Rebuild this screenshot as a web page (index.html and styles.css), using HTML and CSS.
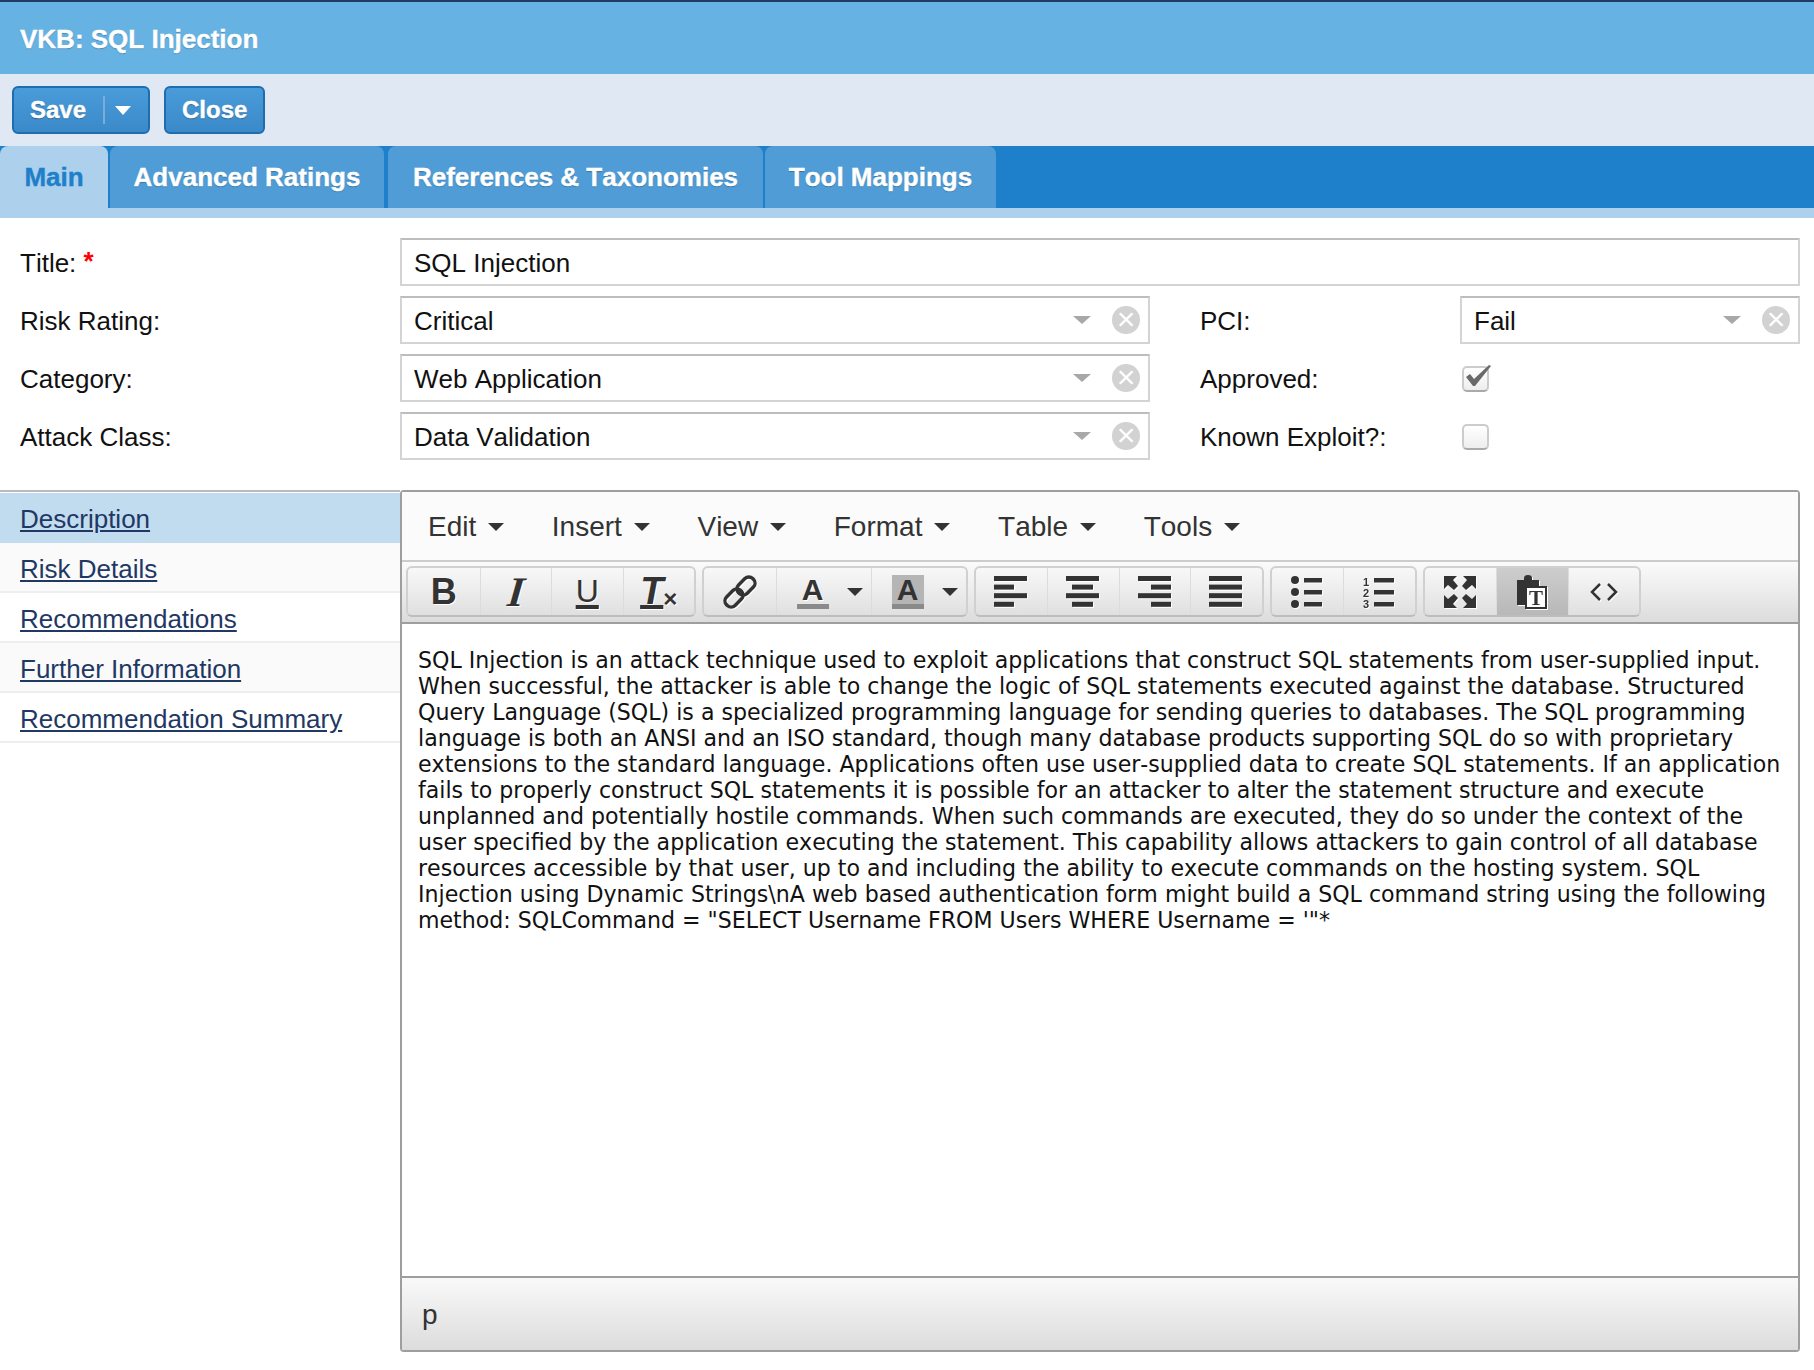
FILE: index.html
```html
<!DOCTYPE html>
<html lang="en">
<head>
  <meta charset="UTF-8" />
  <title>VKB: SQL Injection</title>
  <link rel="stylesheet" href="styles.css">
</head>
<body>

  <header class="page-title">VKB: SQL Injection</header>

  <div class="actions">
    <button class="btn btn-save">
      <span class="btn-label">Save</span>
      <span class="btn-split"></span>
      <span class="btn-caret"></span>
    </button>
    <button class="btn btn-close">Close</button>
  </div>

  <nav class="tabs">
    <a class="tab tab-main active">Main</a>
    <a class="tab tab-ratings">Advanced Ratings</a>
    <a class="tab tab-refs">References &amp; Taxonomies</a>
    <a class="tab tab-tools">Tool Mappings</a>
  </nav>

  <form class="form-grid">
    <label class="label">Title: <span class="req">*</span></label>
    <div class="field field-title">SQL Injection</div>

    <label class="label">Risk Rating:</label>
    <div class="field field-select">
      <span class="field-value">Critical</span>
      <span class="select-caret"></span>
      <span class="select-clear">&times;</span>
    </div>
    <label class="label label-right">PCI:</label>
    <div class="field field-select">
      <span class="field-value">Fail</span>
      <span class="select-caret"></span>
      <span class="select-clear">&times;</span>
    </div>

    <label class="label">Category:</label>
    <div class="field field-select">
      <span class="field-value">Web Application</span>
      <span class="select-caret"></span>
      <span class="select-clear">&times;</span>
    </div>
    <label class="label label-right">Approved:</label>
    <div class="check-cell">
      <span class="checkbox"></span>
      <svg class="check-mark" width="26" height="21" viewBox="0 0 26 21"><path d="M1 12 L5 9 L9 14 L24 0 L26 1 L10 21 L8 21 Z" fill="#6a6a6a"/></svg>
    </div>

    <label class="label">Attack Class:</label>
    <div class="field field-select">
      <span class="field-value">Data Validation</span>
      <span class="select-caret"></span>
      <span class="select-clear">&times;</span>
    </div>
    <label class="label label-right">Known Exploit?:</label>
    <div class="check-cell">
      <span class="checkbox"></span>
    </div>
  </form>

  <div class="split">
    <ul class="side-nav">
      <li class="selected"><a href="#">Description</a></li>
      <li><a href="#">Risk Details</a></li>
      <li><a href="#">Recommendations</a></li>
      <li><a href="#">Further Information</a></li>
      <li><a href="#">Recommendation Summary</a></li>
    </ul>

    <div class="editor">
      <div class="menubar">
        <span class="menu-item">Edit<i class="menu-caret"></i></span>
        <span class="menu-item">Insert<i class="menu-caret"></i></span>
        <span class="menu-item">View<i class="menu-caret"></i></span>
        <span class="menu-item">Format<i class="menu-caret"></i></span>
        <span class="menu-item">Table<i class="menu-caret"></i></span>
        <span class="menu-item">Tools<i class="menu-caret"></i></span>
      </div>

      <div class="toolbar">
        <div class="tool-group">
          <span class="tool glyph glyph-b">B</span>
          <span class="tool glyph"><span class="glyph-i">I</span></span>
          <span class="tool glyph glyph-u">U</span>
          <span class="tool glyph"><span class="glyph-t">T</span><small class="glyph-x">&times;</small></span>
        </div>
        <div class="tool-group">
          <span class="tool">
            <svg width="36" height="36" viewBox="0 0 36 36" fill="none" stroke="#333" stroke-width="3.4"><rect x="18" y="2" width="12" height="20" rx="5.5" transform="rotate(45 24 12)"/><rect x="6" y="14" width="12" height="20" rx="5.5" transform="rotate(45 12 24)"/></svg>
          </span>
          <span class="tool tool-wide"><span class="color-a">A</span><i class="tool-caret"></i></span>
          <span class="tool tool-wide"><span class="color-a color-a-bg">A</span><i class="tool-caret"></i></span>
        </div>
        <div class="tool-group">
          <span class="tool"><svg width="34" height="31" viewBox="0 0 34 31" fill="#333"><rect width="33" height="5"/><rect y="8.6" width="20" height="5"/><rect y="17.2" width="33" height="5"/><rect y="25.8" width="20" height="5"/></svg></span>
          <span class="tool"><svg width="34" height="31" viewBox="0 0 34 31" fill="#333"><rect width="33" height="5"/><rect x="6" y="8.6" width="21" height="5"/><rect y="17.2" width="33" height="5"/><rect x="6" y="25.8" width="21" height="5"/></svg></span>
          <span class="tool"><svg width="34" height="31" viewBox="0 0 34 31" fill="#333"><rect width="33" height="5"/><rect x="13" y="8.6" width="20" height="5"/><rect y="17.2" width="33" height="5"/><rect x="13" y="25.8" width="20" height="5"/></svg></span>
          <span class="tool"><svg width="34" height="31" viewBox="0 0 34 31" fill="#333"><rect width="33" height="5"/><rect y="8.6" width="33" height="5"/><rect y="17.2" width="33" height="5"/><rect y="25.8" width="33" height="5"/></svg></span>
        </div>
        <div class="tool-group">
          <span class="tool"><svg width="34" height="32" viewBox="0 0 34 32" fill="#333"><circle cx="5" cy="4" r="4"/><circle cx="5" cy="16" r="4"/><circle cx="5" cy="28" r="4"/><rect x="14" y="2" width="18" height="4.5"/><rect x="14" y="14" width="18" height="4.5"/><rect x="14" y="26" width="18" height="4.5"/></svg></span>
          <span class="tool"><svg width="34" height="38" viewBox="0 0 34 38" fill="#333"><text x="1" y="12.5" class="list-num">1</text><text x="1" y="23.5" class="list-num">2</text><text x="1" y="34.5" class="list-num">3</text><rect x="12" y="5" width="20" height="4.5"/><rect x="12" y="17" width="20" height="4.5"/><rect x="12" y="29" width="20" height="4.5"/></svg></span>
        </div>
        <div class="tool-group">
          <span class="tool"><svg width="34" height="34" viewBox="0 0 34 34" fill="#333"><path d="M1 1h13l-4 4 5 6-4 4-6-5-4 4zM33 1H20l4 4-5 6 4 4 6-5 4 4zM1 33h13l-4-4 5-6-4-4-6 5-4-4zM33 33H20l4-4-5-6 4-4 6 5 4-4z"/></svg></span>
          <span class="tool tool-on"><svg width="32" height="34" viewBox="0 0 32 34"><path d="M1 5h7V3q0-3 4-3t4 3v2h7v8H14v17H1z" fill="#333"/><rect x="10" y="12" width="20" height="21" fill="#fff" stroke="#333" stroke-width="2"/><text x="20" y="30" class="paste-t">T</text></svg></span>
          <span class="tool"><svg width="28" height="20" viewBox="0 0 28 20" fill="none" stroke="#333" stroke-width="2.5"><path d="M10 2 L2 10 L10 18M18 2 L26 10 L18 18"/></svg></span>
        </div>
      </div>

      <div class="editor-body">SQL Injection is an attack technique used to exploit applications that construct SQL statements from user-supplied input.<br>When successful, the attacker is able to change the logic of SQL statements executed against the database. Structured<br>Query Language (SQL) is a specialized programming language for sending queries to databases. The SQL programming<br>language is both an ANSI and an ISO standard, though many database products supporting SQL do so with proprietary<br>extensions to the standard language. Applications often use user-supplied data to create SQL statements. If an application<br>fails to properly construct SQL statements it is possible for an attacker to alter the statement structure and execute<br>unplanned and potentially hostile commands. When such commands are executed, they do so under the context of the<br>user specified by the application executing the statement. This capability allows attackers to gain control of all database<br>resources accessible by that user, up to and including the ability to execute commands on the hosting system. SQL<br>Injection using Dynamic Strings\nA web based authentication form might build a SQL command string using the following<br>method: SQLCommand = "SELECT Username FROM Users WHERE Username = '"*</div>

      <div class="statusbar">p</div>
    </div>
  </div>

</body>
</html>
```

FILE: styles.css
```css
* {
  box-sizing: border-box;
}
body {
  font-family: 'Liberation Sans', Arial, sans-serif;
  font-size: 26px;
  font-kerning: none;
  color: #111;
  background-color: white;
  margin: 0;
}

/* Header + action bar */
.page-title {
  height: 74px;
  border-top: 2px solid #1f3c66;
  background-color: #66b2e2;
  color: white;
  font-weight: bold;
  line-height: 74px;
  padding-left: 20px;
  text-shadow: 0 1px 1px rgba(0,0,0,0.25);
  -webkit-text-stroke: 0.4px currentColor;
}
.actions {
  height: 72px;
  background-color: #e0e9f3;
  padding: 12px;
  display: flex;
  gap: 14px;
}
.btn {
  height: 48px;
  padding: 0 16px;
  font: bold 24px 'Liberation Sans', Arial, sans-serif;
  font-kerning: none;
  color: white;
  border: 2px solid #1d6db0;
  border-radius: 6px;
  background: linear-gradient(#4a9bd9, #3a8aca);
  text-shadow: 0 1px 1px rgba(0,0,0,0.35);
  -webkit-text-stroke: 0.4px currentColor;
  display: flex;
  align-items: center;
}
.btn-save {
  width: 138px;
  padding-right: 0;
}
.btn-close {
  width: 101px;
}
.btn-split {
  flex: none;
  width: 2px;
  height: 28px;
  background-color: #79aedb;
  margin-left: 17px;
}
.btn-caret {
  flex: none;
  margin-left: 10px;
  border-top: 9px solid white;
  border-left: 8px solid transparent;
  border-right: 8px solid transparent;
}

/* Tabs */
.tabs {
  height: 72px;
  background-color: #1e80ca;
  border-bottom: 10px solid #add0ec;
  display: flex;
}
.tab {
  height: 62px;
  line-height: 62px;
  text-align: center;
  font-weight: bold;
  color: white;
  background-color: #4f9cd6;
  border-radius: 8px 8px 0 0;
  text-shadow: 0 1px 1px rgba(0,0,0,0.25);
  -webkit-text-stroke: 0.4px currentColor;
}
.tab-main {
  width: 108px;
}
.tab-ratings {
  width: 274px;
  margin-left: 2px;
}
.tab-refs {
  width: 375px;
  margin-left: 4px;
}
.tab-tools {
  width: 231px;
  margin-left: 2px;
}
.tab.active {
  background-color: #add0ec;
  color: #1e80ca;
  text-shadow: none;
}

/* Main form */
.form-grid {
  display: grid;
  grid-template-columns: 380px 750px 310px 340px;
  grid-auto-rows: 48px;
  row-gap: 10px;
  padding: 20px 14px 0 20px;
  margin-bottom: 30px;
}
.label {
  display: flex;
  align-items: center;
  white-space: pre;
  padding-top: 2px;
}
.label-right {
  padding-left: 50px;
}
.req {
  color: #f00;
  font-weight: bold;
  margin-bottom: 4px;
}
.field {
  border: 2px solid #d4d4d4;
  border-top-color: #bdbdbd;
  padding: 0 12px;
  line-height: 46px;
}
.field-title {
  grid-column: span 3;
}
.field-select {
  display: flex;
  align-items: center;
}
.field-value {
  flex: 1;
  padding-top: 2px;
}
.select-caret {
  border-top: 8px solid #a8a8a8;
  border-left: 9px solid transparent;
  border-right: 9px solid transparent;
  margin-right: 21px;
}
.select-clear {
  width: 28px;
  height: 28px;
  border-radius: 50%;
  background-color: #d2d2d2;
  color: white;
  font-size: 32px;
  line-height: 26px;
  text-align: center;
  margin-right: -4px;
}
.check-cell {
  position: relative;
  display: flex;
  align-items: center;
}
.checkbox {
  width: 27px;
  height: 26px;
  margin: 2px 0 0 2px;
  border: 2px solid #ccc;
  border-bottom-color: #aaa;
  border-radius: 5px;
  background: linear-gradient(#fff, #eee);
}
.check-mark {
  position: absolute;
  left: 5px;
  top: 11px;
}

/* Lower part: side list + editor */
.split {
  display: flex;
}
.side-nav {
  width: 400px;
  margin: 0;
  padding: 1px 0 0;
  list-style: none;
  border-top: 2px solid #bbb;
}
.side-nav li {
  height: 50px;
  line-height: 52px;
  padding-left: 20px;
  border-bottom: 2px solid #eee;
}
.side-nav li:nth-child(even) {
  background-color: #fafafa;
}
.side-nav li.selected {
  background-color: #c1dbef;
  border-bottom-color: #c1dbef;
}
.side-nav a {
  color: #1f3864;
}

.editor {
  width: 1400px;
  height: 862px;
  border: 2px solid #9e9e9e;
  border-radius: 4px;
  display: flex;
  flex-direction: column;
}
.menubar {
  height: 70px;
  flex: none;
  background-color: #fbfbfb;
  border-bottom: 2px solid #ccc;
  padding: 2px 0 0 26px;
  display: flex;
  align-items: center;
  color: #333;
  font-size: 28px;
}
.menu-item {
  display: flex;
  align-items: center;
}
.menu-caret {
  width: 0;
  border-top: 8px solid #333;
  border-left: 8px solid transparent;
  border-right: 8px solid transparent;
  margin: 0 47.6px 0 12px;
}

.toolbar {
  height: 62px;
  flex: none;
  background: linear-gradient(#fbfbfb, #dcdcdc);
  border-bottom: 2px solid #9e9e9e;
  padding: 4px 0 0 4px;
  display: flex;
  gap: 6px;
}
.tool-group {
  height: 51px;
  border: 2px solid #d0d0d0;
  border-bottom-color: #bdbdbd;
  border-radius: 6px;
  display: flex;
}
.tool {
  width: 71.5px;
  display: flex;
  align-items: center;
  justify-content: center;
  border-left: 1px solid #dcdcdc;
  color: #333;
}
.tool:first-child {
  border-left: none;
}
.tool svg {
  filter: drop-shadow(1px 1px 0 white);
}
.tool-wide {
  width: 95px;
  justify-content: flex-start;
  padding-left: 20px;
  gap: 18px;
}
.tool-on {
  background: linear-gradient(#cdcdcd, #b8b8b8);
}
.paste-t {
  font: bold 21px 'Liberation Serif', serif;
  text-anchor: middle;
  fill: #333;
}
.list-num {
  font: bold 11px 'Liberation Sans', sans-serif;
}
.glyph {
  text-shadow: 1px 1px 0 white;
}
.glyph-b {
  font: bold 36px 'Liberation Sans', sans-serif;
}
.glyph-i {
  font: italic bold 42px 'Liberation Serif', serif;
  display: inline-block;
  transform: skewX(-6deg);
}
.glyph-u {
  font: 32px 'Liberation Sans', sans-serif;
  text-decoration: underline 4px;
  text-underline-offset: 3px;
}
.glyph-t {
  font: italic bold 38px 'Liberation Sans', sans-serif;
  text-decoration: underline 4px;
  text-underline-offset: 1px;
}
.glyph-x {
  font: bold 24px 'Liberation Sans', sans-serif;
  margin-top: 14px;
}
.color-a {
  width: 32px;
  height: 34px;
  flex: none;
  border-bottom: 5px solid #8a8a8a;
  font: bold 30px/30px 'Liberation Sans', sans-serif;
  text-align: center;
  text-shadow: 1px 1px 0 white;
}
.color-a-bg {
  background-color: #b5b5b5;
  text-shadow: none;
}
.tool-caret {
  border-top: 8px solid #333;
  border-left: 8px solid transparent;
  border-right: 8px solid transparent;
}

.editor-body {
  flex: 1;
  padding: 23px 16px;
  font-family: 'DejaVu Sans', Verdana, sans-serif;
  font-size: 22.1px;
  line-height: 26px;
  color: #111;
  white-space: nowrap;
}
.statusbar {
  height: 74px;
  flex: none;
  border-top: 2px solid #9e9e9e;
  background: linear-gradient(#f9f9f9, #dcdcdc);
  padding-left: 20px;
  line-height: 74px;
  font-size: 28px;
  color: #333;
}
```
